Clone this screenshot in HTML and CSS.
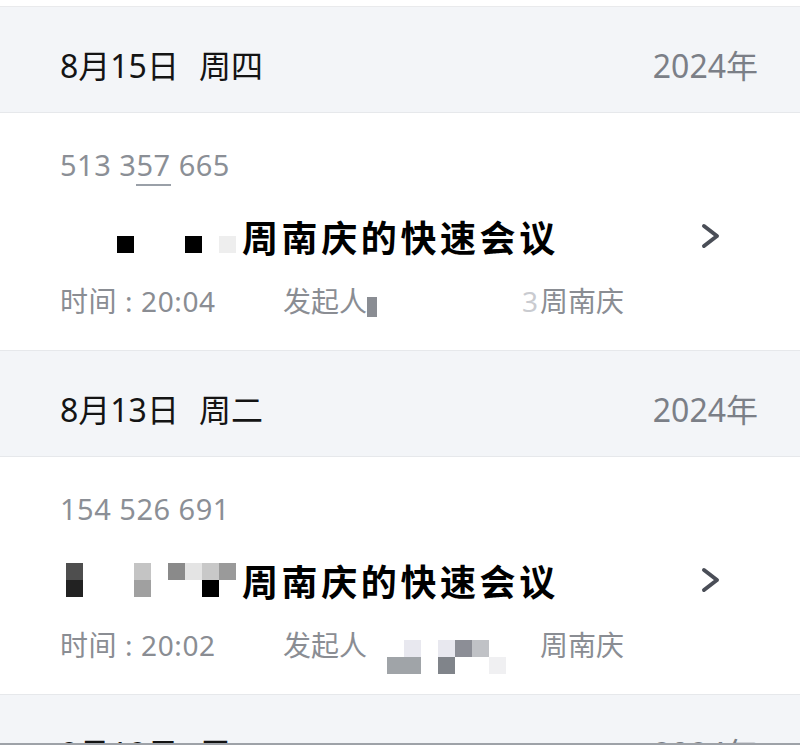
FILE: index.html
```html
<!DOCTYPE html>
<html lang="zh-CN">
<head>
  <meta charset="UTF-8" />
  <meta name="viewport" content="width=device-width, initial-scale=1" />
  <title>会议记录</title>
  <link rel="stylesheet" href="styles.css">
</head>
<body>
  <div class="top-gap"></div>

  <!-- 8月15日 -->
  <div class="day-head">
    <div class="day-date">8月15日<span class="weekday">周四</span></div>
    <div class="day-year">2024年</div>
  </div>
  <div class="meeting">
    <div class="meeting-no">513 3<span class="underlined">57</span> 665</div>
    <div class="meeting-title-row">
      <div class="meeting-title">
        <span class="mosaic">
          <i></i><i></i><i></i><i></i><i></i><i></i><i></i><i></i><i></i><i></i>
          <i></i><i></i><i></i><i class="c-000"></i><i></i><i></i><i></i><i class="c-000"></i><i></i><i class="c-eee"></i>
        </span>周南庆的快速会议
      </div>
      <svg class="chevron" viewBox="0 0 24 30" width="24" height="30">
        <polyline points="6,5 19,15 6,25" />
      </svg>
    </div>
    <div class="meeting-meta">
      <span class="meta-time">时间 : 20:04</span>
      <span class="meta-host">发起人<span class="host-blur"></span><span class="ghost">3</span></span>
      <span class="meta-name">周南庆</span>
    </div>
  </div>

  <!-- 8月13日 -->
  <div class="day-head">
    <div class="day-date">8月13日<span class="weekday">周二</span></div>
    <div class="day-year">2024年</div>
  </div>
  <div class="meeting">
    <div class="meeting-no">154 526 691</div>
    <div class="meeting-title-row">
      <div class="meeting-title">
        <span class="mosaic">
          <i class="c-555"></i><i></i><i></i><i></i><i class="c-c4"></i><i></i><i class="c-8a"></i><i class="c-e4"></i><i class="c-c8"></i><i class="c-9a"></i>
          <i class="c-222"></i><i></i><i></i><i></i><i class="c-a0"></i><i></i><i></i><i></i><i class="c-000"></i><i></i>
        </span>周南庆的快速会议
      </div>
      <svg class="chevron" viewBox="0 0 24 30" width="24" height="30">
        <polyline points="6,5 19,15 6,25" />
      </svg>
    </div>
    <div class="meeting-meta">
      <span class="meta-time">时间 : 20:02</span>
      <span class="meta-host">发起人
        <span class="mosaic meta-mosaic">
          <i></i><i class="c-e8"></i><i></i><i class="c-e8"></i><i class="c-8c"></i><i class="c-c0"></i><i></i>
          <i class="c-a4"></i><i class="c-a4"></i><i></i><i class="c-80"></i><i></i><i></i><i class="c-f0"></i>
        </span>
      </span>
      <span class="meta-name">周南庆</span>
    </div>
  </div>

  <!-- 8月12日 -->
  <div class="day-head">
    <div class="day-date">8月12日<span class="weekday">周一</span></div>
    <div class="day-year">2024年</div>
  </div>

  <div class="bottom-edge"></div>
</body>
</html>
```

FILE: styles.css
```css
* {
  box-sizing: border-box;
  margin: 0;
  padding: 0;
}

html,
body {
  height: 745px;
  overflow: hidden;
}

body {
  background: #fff;
  font-family: "Noto Sans", "Noto Sans CJK SC", sans-serif;
  color: #111;
}

.top-gap {
  height: 7px;
  border-bottom: 1px solid #e9eaec;
}

/* Date header */
.day-head {
  height: 106px;
  background: #f3f5f8;
  border-bottom: 1px solid #e6e8eb;
  display: flex;
  align-items: center;
  justify-content: space-between;
  padding: 8px 42px 0 60px;
}

.day-date {
  font-size: 32px;
  color: #141414;
}

.weekday {
  margin-left: 20px;
}

.day-year {
  font-size: 32px;
  color: #7b7f87;
}

/* Meeting card */
.meeting {
  height: 238px;
  background: #fff;
  border-bottom: 1px solid #e6e8eb;
  padding: 34px 78px 0 60px;
  display: flex;
  flex-direction: column;
}

.meeting-no {
  font-size: 29px;
  line-height: 36px;
  color: #8b8f96;
  letter-spacing: 0.5px;
}

.underlined {
  border-bottom: 2px solid #9aa0a8;
}

.meeting-title-row {
  margin-top: 28px;
  height: 50px;
  display: flex;
  align-items: center;
  justify-content: space-between;
}

.meeting-title {
  display: flex;
  align-items: center;
  font-family: "Noto Sans CJK SC", sans-serif;
  font-weight: 700;
  font-size: 36px;
  line-height: 50px;
  color: #000;
  letter-spacing: 3.6px;
}

.chevron polyline {
  fill: none;
  stroke: #4a4e57;
  stroke-width: 4;
  stroke-linecap: round;
  stroke-linejoin: round;
}

/* Pixelated redactions */
.mosaic {
  display: inline-grid;
  grid-template-columns: repeat(10, 17px);
  grid-template-rows: repeat(2, 17px);
  margin: 0 6px 0 6px;
}

.mosaic i {
  display: block;
}

.c-000 { background: #000; }
.c-222 { background: #222; }
.c-555 { background: #4e4e4e; }
.c-80 { background: #80848a; }
.c-8a { background: #8a8a8a; }
.c-8c { background: #8c8e96; }
.c-9a { background: #9a9a9a; }
.c-a0 { background: #a0a0a0; }
.c-a4 { background: #a0a4a8; }
.c-c0 { background: #c0c2c6; }
.c-c4 { background: #c4c4c4; }
.c-c8 { background: #c8c8c8; }
.c-e4 { background: #e4e4e4; }
.c-e8 { background: #e8e8ef; }
.c-eee { background: #eeeeee; }
.c-f0 { background: #f0f0f2; }

/* Time / host line */
.meeting-meta {
  margin-top: 22px;
  height: 36px;
  display: flex;
  align-items: center;
  font-size: 28px;
  line-height: 36px;
  color: #8a8d93;
}

.meta-time {
  width: 223px;
  letter-spacing: 0.6px;
}

.meta-host {
  display: flex;
  align-items: center;
  width: 257px;
}

.host-blur {
  display: inline-block;
  width: 10px;
  height: 20px;
  margin-top: 12px;
  background: #8a8d93;
}

.ghost {
  margin-left: auto;
  margin-right: 2px;
  color: #c9cbd0;
}

.meta-mosaic {
  grid-template-columns: repeat(7, 17px);
  margin: 24px 0 0 20px;
}

.bottom-edge {
  position: fixed;
  left: 0;
  right: 0;
  bottom: 0;
  height: 2px;
  background: #9ea2a8;
}
```
